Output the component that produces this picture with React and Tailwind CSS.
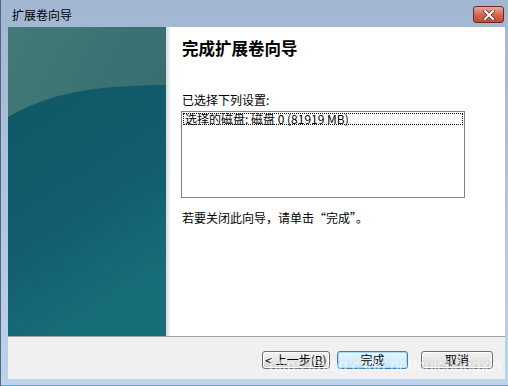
import React from "react";

const cjk = { fontFamily: '"Noto Sans CJK SC", "Noto Sans", sans-serif' };

// left wizard banner, a drawing
const Banner = () => (
  <svg width="158" height="309" viewBox="0 0 158 309" className="block">
    <defs>
      <linearGradient id="top" x1="0" y1="0" x2="1" y2="1">
        <stop offset="0" stopColor="#437a77" />
        <stop offset="1" stopColor="#2d6670" />
      </linearGradient>
      <linearGradient id="bot" x1="0" y1="0" x2="0.4" y2="1">
        <stop offset="0" stopColor="#0f5766" />
        <stop offset="0.6" stopColor="#125e6e" />
        <stop offset="1" stopColor="#176e79" />
      </linearGradient>
    </defs>
    <rect width="158" height="309" fill="url(#top)" />
    <path d="M0 90 C 40 66, 90 58, 158 58 L158 309 L0 309 Z" fill="url(#bot)" />
  </svg>
);

const Btn = ({ children, focus, w }) => (
  <div
    className={`h-[18px] ${w} flex items-center justify-center rounded-[3px] border text-[12px] text-black ${
      focus
        ? "border-[#3c7fb1] bg-gradient-to-b from-[#eaf6fd] to-[#bee6fd] shadow-[inset_0_0_0_1px_#a6d9f4]"
        : "border-[#707070] bg-gradient-to-b from-[#f2f2f2] via-[#e6e6e6] to-[#d0d0d0] shadow-[inset_0_0_0_1px_#fcfcfc]"
    }`}
    style={cjk}
  >
    {children}
  </div>
);

export default function App() {
  return (
    <div className="relative w-[508px] h-[386px] bg-gradient-to-b from-[#a1b6d1] to-[#bcd3ec] border-l border-[#55657a] flex flex-col overflow-hidden" style={cjk}>
      {/* title bar */}
      <div className="h-[27px] flex items-start pl-[11px] pr-[4px]">
        <span className="text-[12px] leading-none mt-[9px] text-black">扩展卷向导</span>
        <div className="ml-auto mt-[6px] w-[31px] h-[17px] rounded-[3px] border border-[#6b2a22] bg-gradient-to-b from-[#e9a898] via-[#d26a55] to-[#c04a36] flex items-center justify-center">
          <svg width="12" height="10" viewBox="0 0 12 10">
            <path d="M2 1 L10 9 M10 1 L2 9" stroke="#5a2a22" strokeWidth="3.4" strokeLinecap="square" />
            <path d="M2 1 L10 9 M10 1 L2 9" stroke="#ffffff" strokeWidth="2" strokeLinecap="square" />
          </svg>
        </div>
      </div>

      {/* client area */}
      <div className="ml-[7px] mr-[3px] flex flex-col">
        <div className="h-[309px] flex bg-white">
          <Banner />
          <div className="w-[5px] bg-gradient-to-r from-[#d8d8d8] to-white" />
          <div className="flex flex-col pl-[11px] pt-[10px]">
            <div className="text-[16.5px] leading-[22px] font-bold text-black">完成扩展卷向导</div>
            <div className="mt-[33px] text-[12px] leading-[16px] text-black">已选择下列设置:</div>
            <div className="mt-[3px] -ml-[1px] w-[284px] h-[87px] border border-[#838383] bg-white p-[1px]">
              <div className="h-[12px] border border-dotted border-black flex items-center pl-[1px] text-[12px] leading-none text-black whitespace-pre">
                选择的磁盘: 磁盘 0 (81919 MB)
              </div>
            </div>
            <div className="mt-[12px] text-[12px] leading-[16px] text-black">若要关闭此向导，请单击“完成”。</div>
          </div>
        </div>
        <div className="h-px bg-[#a0a0a0]" />
        <div className="h-[42px] bg-[#f0f0f0] flex items-start pt-[14px] pl-[254px]">
          <Btn w="w-[68px]">
            &lt; 上一步(<span className="underline">B</span>)
          </Btn>
          <div className="ml-[7px]">
            <Btn w="w-[71px]" focus>完成</Btn>
          </div>
          <div className="ml-[13px]">
            <Btn w="w-[72px]">取消</Btn>
          </div>
        </div>
      </div>
      <div className="mt-auto h-px bg-[#2ec4dc]" />

      {/* watermark */}
      <div
        className="absolute left-[268px] top-[358px] text-[16px] leading-none text-white/60 pointer-events-none"
        style={{ fontFamily: '"Liberation Sans", Arial, sans-serif' }}
      >
        https://blog.csdn.net/cuichongxin
      </div>
    </div>
  );
}
